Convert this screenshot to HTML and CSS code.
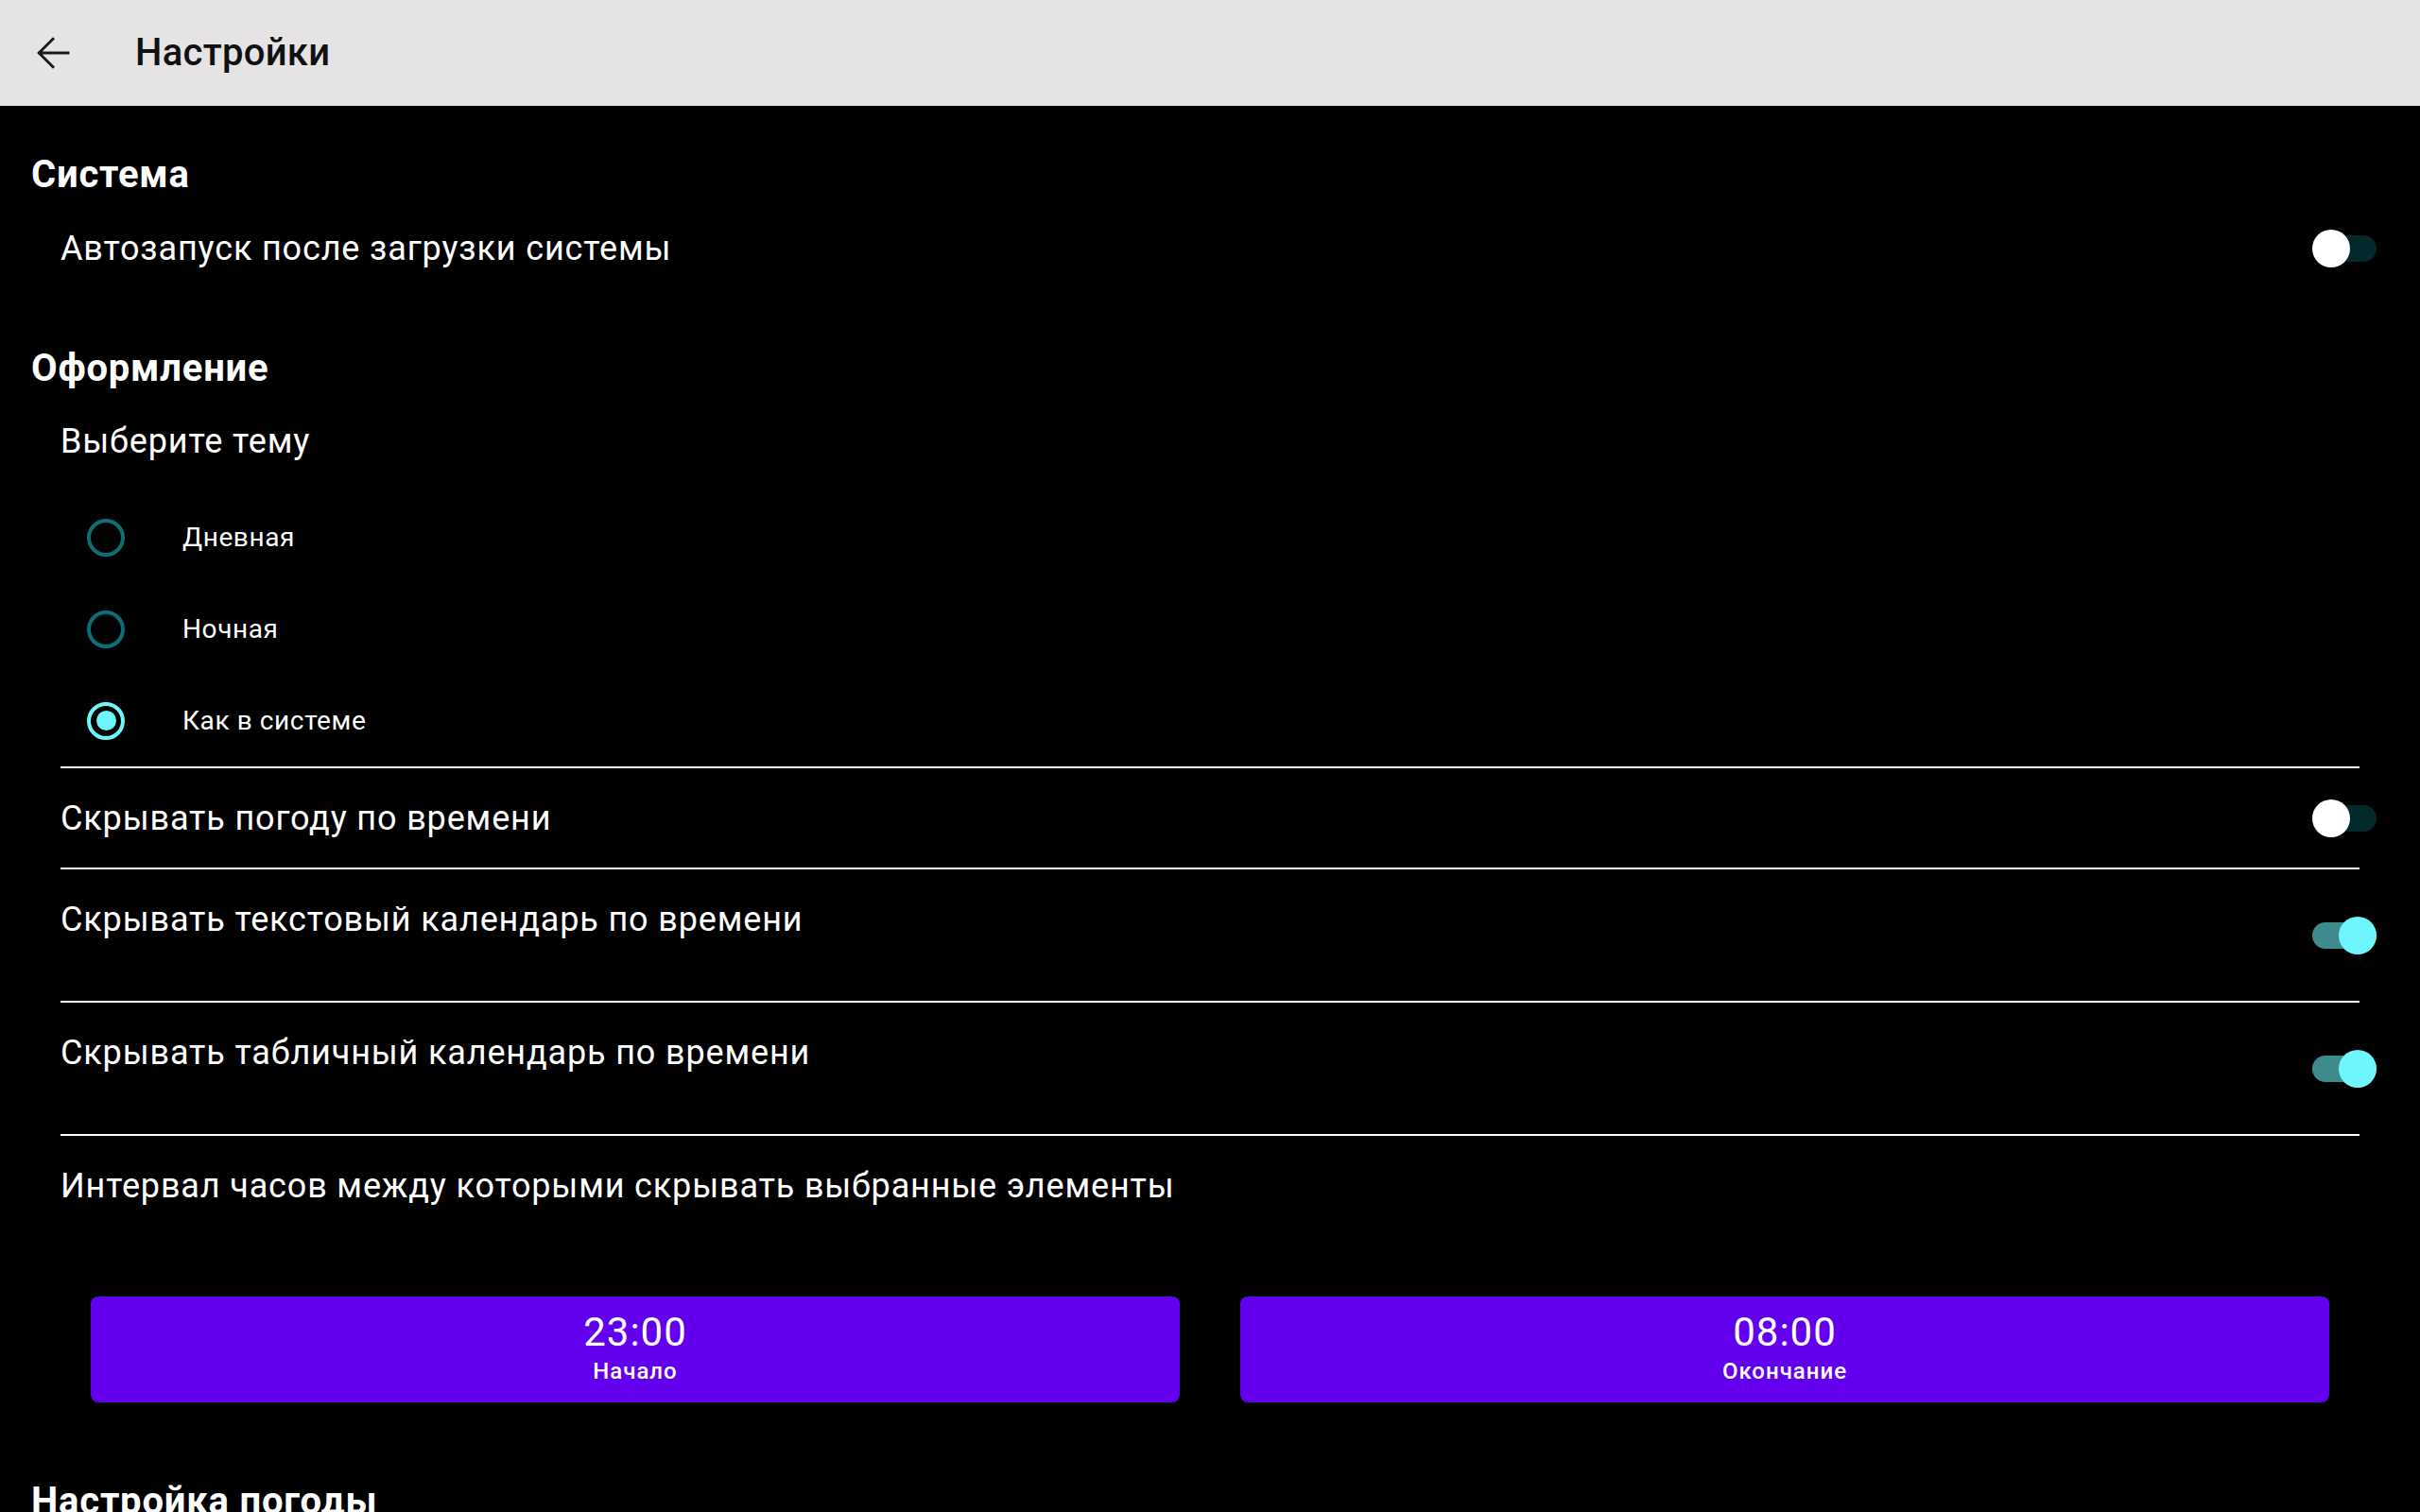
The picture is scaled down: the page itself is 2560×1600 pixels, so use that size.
FILE: index.html
```html
<!DOCTYPE html>
<html lang="ru">
<head>
<meta charset="utf-8">
<title>Настройки</title>
<link rel="stylesheet" href="styles.css">
</head>
<body>
<header class="toolbar">
  <button class="back" aria-label="Назад">
    <svg viewBox="0 0 24 24" width="48" height="48"><path d="M20 12H4.8M12 4.6L4.6 12L12 19.4" fill="none" stroke="#1a1a1a" stroke-width="1.45" stroke-linecap="square"/></svg>
  </button>
  <h1 class="toolbar-title">Настройки</h1>
</header>
<main class="content">
  <h2 class="cat">Система</h2>
  <div class="row row-108">
    <span class="pref-title">Автозапуск после загрузки системы</span>
    <span class="switch"><span class="track"></span><span class="thumb"></span></span>
  </div>

  <h2 class="cat">Оформление</h2>
  <div class="row row-106">
    <span class="pref-title">Выберите тему</span>
  </div>
  <div class="radios">
    <div class="radio-row"><span class="radio"></span><span class="radio-label">Дневная</span></div>
    <div class="radio-row"><span class="radio"></span><span class="radio-label">Ночная</span></div>
    <div class="radio-row"><span class="radio checked"></span><span class="radio-label">Как в системе</span></div>
  </div>
  <div class="divider"></div>
  <div class="row row-105">
    <span class="pref-title">Скрывать погоду по времени</span>
    <span class="switch"><span class="track"></span><span class="thumb"></span></span>
  </div>
  <div class="divider"></div>
  <div class="row row-tall">
    <span class="pref-title top">Скрывать текстовый календарь по времени</span>
    <span class="switch on"><span class="track"></span><span class="thumb"></span></span>
  </div>
  <div class="divider"></div>
  <div class="row row-tall">
    <span class="pref-title top">Скрывать табличный календарь по времени</span>
    <span class="switch on"><span class="track"></span><span class="thumb"></span></span>
  </div>
  <div class="divider"></div>
  <div class="row row-interval">
    <span class="pref-title top">Интервал часов между которыми скрывать выбранные элементы</span>
  </div>
  <div class="buttons">
    <button class="time-btn"><span class="time">23:00</span><span class="time-label">Начало</span></button>
    <button class="time-btn"><span class="time">08:00</span><span class="time-label">Окончание</span></button>
  </div>
  <h2 class="cat">Настройка погоды</h2>
</main>
</body>
</html>
```
FILE: styles.css
```css
html, body {
  margin: 0;
  padding: 0;
  background: #000;
  height: 1600px;
  overflow: hidden;
}
body {
  font-family: Roboto, "Noto Sans", sans-serif;
  color: #fff;
}
.toolbar {
  height: 112px;
  background: #e5e3e4;
  display: flex;
  align-items: center;
  padding-left: 32px;
  box-sizing: border-box;
}
.back {
  width: 48px;
  height: 48px;
  padding: 0;
  border: 0;
  background: transparent;
  display: flex;
}
.toolbar-title {
  margin: 0 0 0 63px;
  font-size: 40px;
  font-weight: 500;
  line-height: 48px;
  letter-spacing: 0.3px;
  color: #111;
}
.content {
  display: flex;
  flex-direction: column;
}
.cat {
  margin: 0;
  padding: 49px 0 0 33px;
  font-size: 40px;
  line-height: 48px;
  font-weight: 700;
  letter-spacing: 0.8px;
  color: #fff;
}
.row {
  display: flex;
  align-items: center;
  justify-content: space-between;
  padding: 0 46px 0 64px;
}
.row-108 { height: 108px; }
.row-106 { height: 106px; }
.row-105 { height: 105px; }
.row-tall { height: 139px; }
.row-interval { height: 73px; align-items: flex-start; }
.pref-title {
  font-size: 36px;
  line-height: 40px;
  letter-spacing: 0.85px;
  color: #fff;
}
.pref-title.top {
  align-self: flex-start;
  padding-top: 33px;
}
.switch {
  position: relative;
  width: 68px;
  height: 40px;
  flex: none;
}
.switch .track {
  position: absolute;
  left: 0;
  top: 6px;
  width: 68px;
  height: 28px;
  border-radius: 14px;
  background: #03292d;
}
.switch .thumb {
  position: absolute;
  left: 0;
  top: 0;
  width: 40px;
  height: 40px;
  border-radius: 50%;
  background: #fff;
}
.switch.on .track { background: #3e8b8d; }
.switch.on .thumb { left: 28px; background: #6ff6fd; }
.radios {
  display: flex;
  flex-direction: column;
}
.radio-row {
  height: 97px;
  display: flex;
  align-items: center;
  padding-left: 92px;
}
.radio {
  width: 40px;
  height: 40px;
  box-sizing: border-box;
  border: 4px solid #0b6f78;
  border-radius: 50%;
  display: flex;
  align-items: center;
  justify-content: center;
  flex: none;
}
.radio.checked { border-color: #6ff6fd; }
.radio.checked::after {
  content: "";
  width: 21px;
  height: 21px;
  border-radius: 50%;
  background: #6ff6fd;
}
.radio-label {
  margin-left: 61px;
  font-size: 28px;
  line-height: 36px;
  letter-spacing: 0.6px;
  color: #fff;
}
.divider {
  height: 2px;
  margin: 0 64px;
  background: #fff;
}
.buttons {
  display: flex;
  padding: 0 64px;
  margin: 97px 0 32px;
}
.time-btn {
  flex: 1;
  margin: 0 32px;
  height: 112px;
  border: 0;
  border-radius: 8px;
  background: #6200ee;
  color: #fff;
  font-family: Roboto, "Noto Sans", sans-serif;
  display: flex;
  flex-direction: column;
  align-items: center;
  justify-content: center;
  padding: 0 0 6px;
}
.time {
  font-size: 42px;
  line-height: 50px;
  font-weight: 400;
  letter-spacing: 1px;
}
.time-label {
  margin-top: 2px;
  font-size: 24px;
  line-height: 28px;
  font-weight: 500;
  letter-spacing: 1px;
}
```
